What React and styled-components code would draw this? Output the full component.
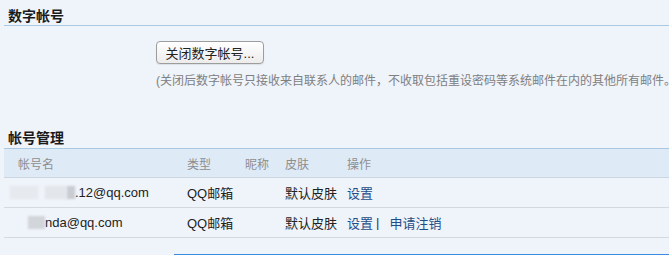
import React from 'react';
import styled, { createGlobalStyle } from 'styled-components';

const GlobalStyle = createGlobalStyle`
  html, body {
    margin: 0;
    padding: 0;
    background: #eff3fa;
    font-family: "Liberation Sans", "Noto Sans CJK SC", sans-serif;
    color: #222;
    overflow: hidden;
  }
`

const Page = styled.div`
  width: 669px;
  height: 255px;
  padding-left: 4px;
  box-sizing: border-box;
  overflow: hidden;
`

const SectionTitle = styled.h2`
  margin: ${p => p.top}px 0 0 0;
  padding: 0 0 0 4px;
  height: ${p => p.h}px;
  font-size: 14px;
  font-weight: bold;
  line-height: 18px;
  color: #1a1a1a;
  border-bottom: 1px solid #a9c9e2;
  box-sizing: border-box;
`

const CloseBox = styled.div`
  padding: 15px 0 0 152px;
`

const CloseButton = styled.button`
  width: 108px;
  height: 23px;
  padding: 0;
  font-family: inherit;
  font-size: 13px;
  color: #222;
  background: linear-gradient(#ffffff, #ececec);
  border: 1px solid #9d9d9d;
  border-radius: 4px;
  box-shadow: 0 1px 1px rgba(0,0,0,0.08);
`

const Note = styled.p`
  margin: 9px 0 0 0;
  font-size: 12px;
  line-height: 16px;
  color: #808080;
  white-space: nowrap;
`

const Row = styled.div`
  display: grid;
  grid-template-columns: 183px 58px 40px 62px 1fr;
  align-items: center;
  height: ${p => (p.head ? 29 : 30)}px;
  background: ${p => (p.head ? '#dfeaf7' : 'transparent')};
  border-bottom: 1px solid ${p => (p.head ? '#cdd6e0' : '#d5d8dc')};
  box-sizing: border-box;
  font-size: ${p => (p.head ? 12 : 13)}px;
  color: ${p => (p.head ? '#8e8e8e' : '#222')};
`

const Cell = styled.div`
  padding-left: ${p => p.pad || 0}px;
  white-space: nowrap;
  display: flex;
  align-items: center;
`

const Blur = styled.span`
  display: inline-block;
  width: ${p => p.w}px;
  height: 13px;
  background: ${p => p.c};
  filter: blur(1px);
`

const Link = styled.a`
  color: #1e4e88;
  text-decoration: none;
`

const Sep = styled.span`
  color: #333;
  margin: 0 10px 0 3px;
`

const BottomBar = styled.div`
  margin: 16px 0 0 170px;
  border-top: 2px solid #3a8ce0;
  height: 4px;
  background: #fff;
`

const accounts = [
  {
    name: (
      <>
        <Blur w={28} c="#e6e9ee" />
        <Blur w={7} c="transparent" />
        <Blur w={22} c="#e3e6ea" />
        <Blur w={8} c="#c9ccd1" />
        .12@qq.com
      </>
    ),
    pad: 6,
    cancel: false,
  },
  {
    name: (
      <>
        <Blur w={17} c="#d2d5da" />
        nda@qq.com
      </>
    ),
    pad: 24,
    cancel: true,
  },
]

export default function App() {
  return (
    <Page>
      <GlobalStyle />
      <SectionTitle top={7} h={19}>数字帐号</SectionTitle>
      <CloseBox>
        <CloseButton>关闭数字帐号...</CloseButton>
        <Note>(关闭后数字帐号只接收来自联系人的邮件，不收取包括重设密码等系统邮件在内的其他所有邮件。)</Note>
      </CloseBox>
      <SectionTitle top={40} h={20}>帐号管理</SectionTitle>
      <Row head>
        <Cell pad={14}>帐号名</Cell>
        <Cell>类型</Cell>
        <Cell>昵称</Cell>
        <Cell>皮肤</Cell>
        <Cell>操作</Cell>
      </Row>
      {accounts.map((a, i) => (
        <Row key={i}>
          <Cell pad={a.pad}>{a.name}</Cell>
          <Cell>QQ邮箱</Cell>
          <Cell />
          <Cell>默认皮肤</Cell>
          <Cell>
            <Link href="#">设置</Link>
            {a.cancel && (
              <>
                <Sep>|</Sep>
                <Link href="#">申请注销</Link>
              </>
            )}
          </Cell>
        </Row>
      ))}
      <BottomBar />
    </Page>
  )
}
